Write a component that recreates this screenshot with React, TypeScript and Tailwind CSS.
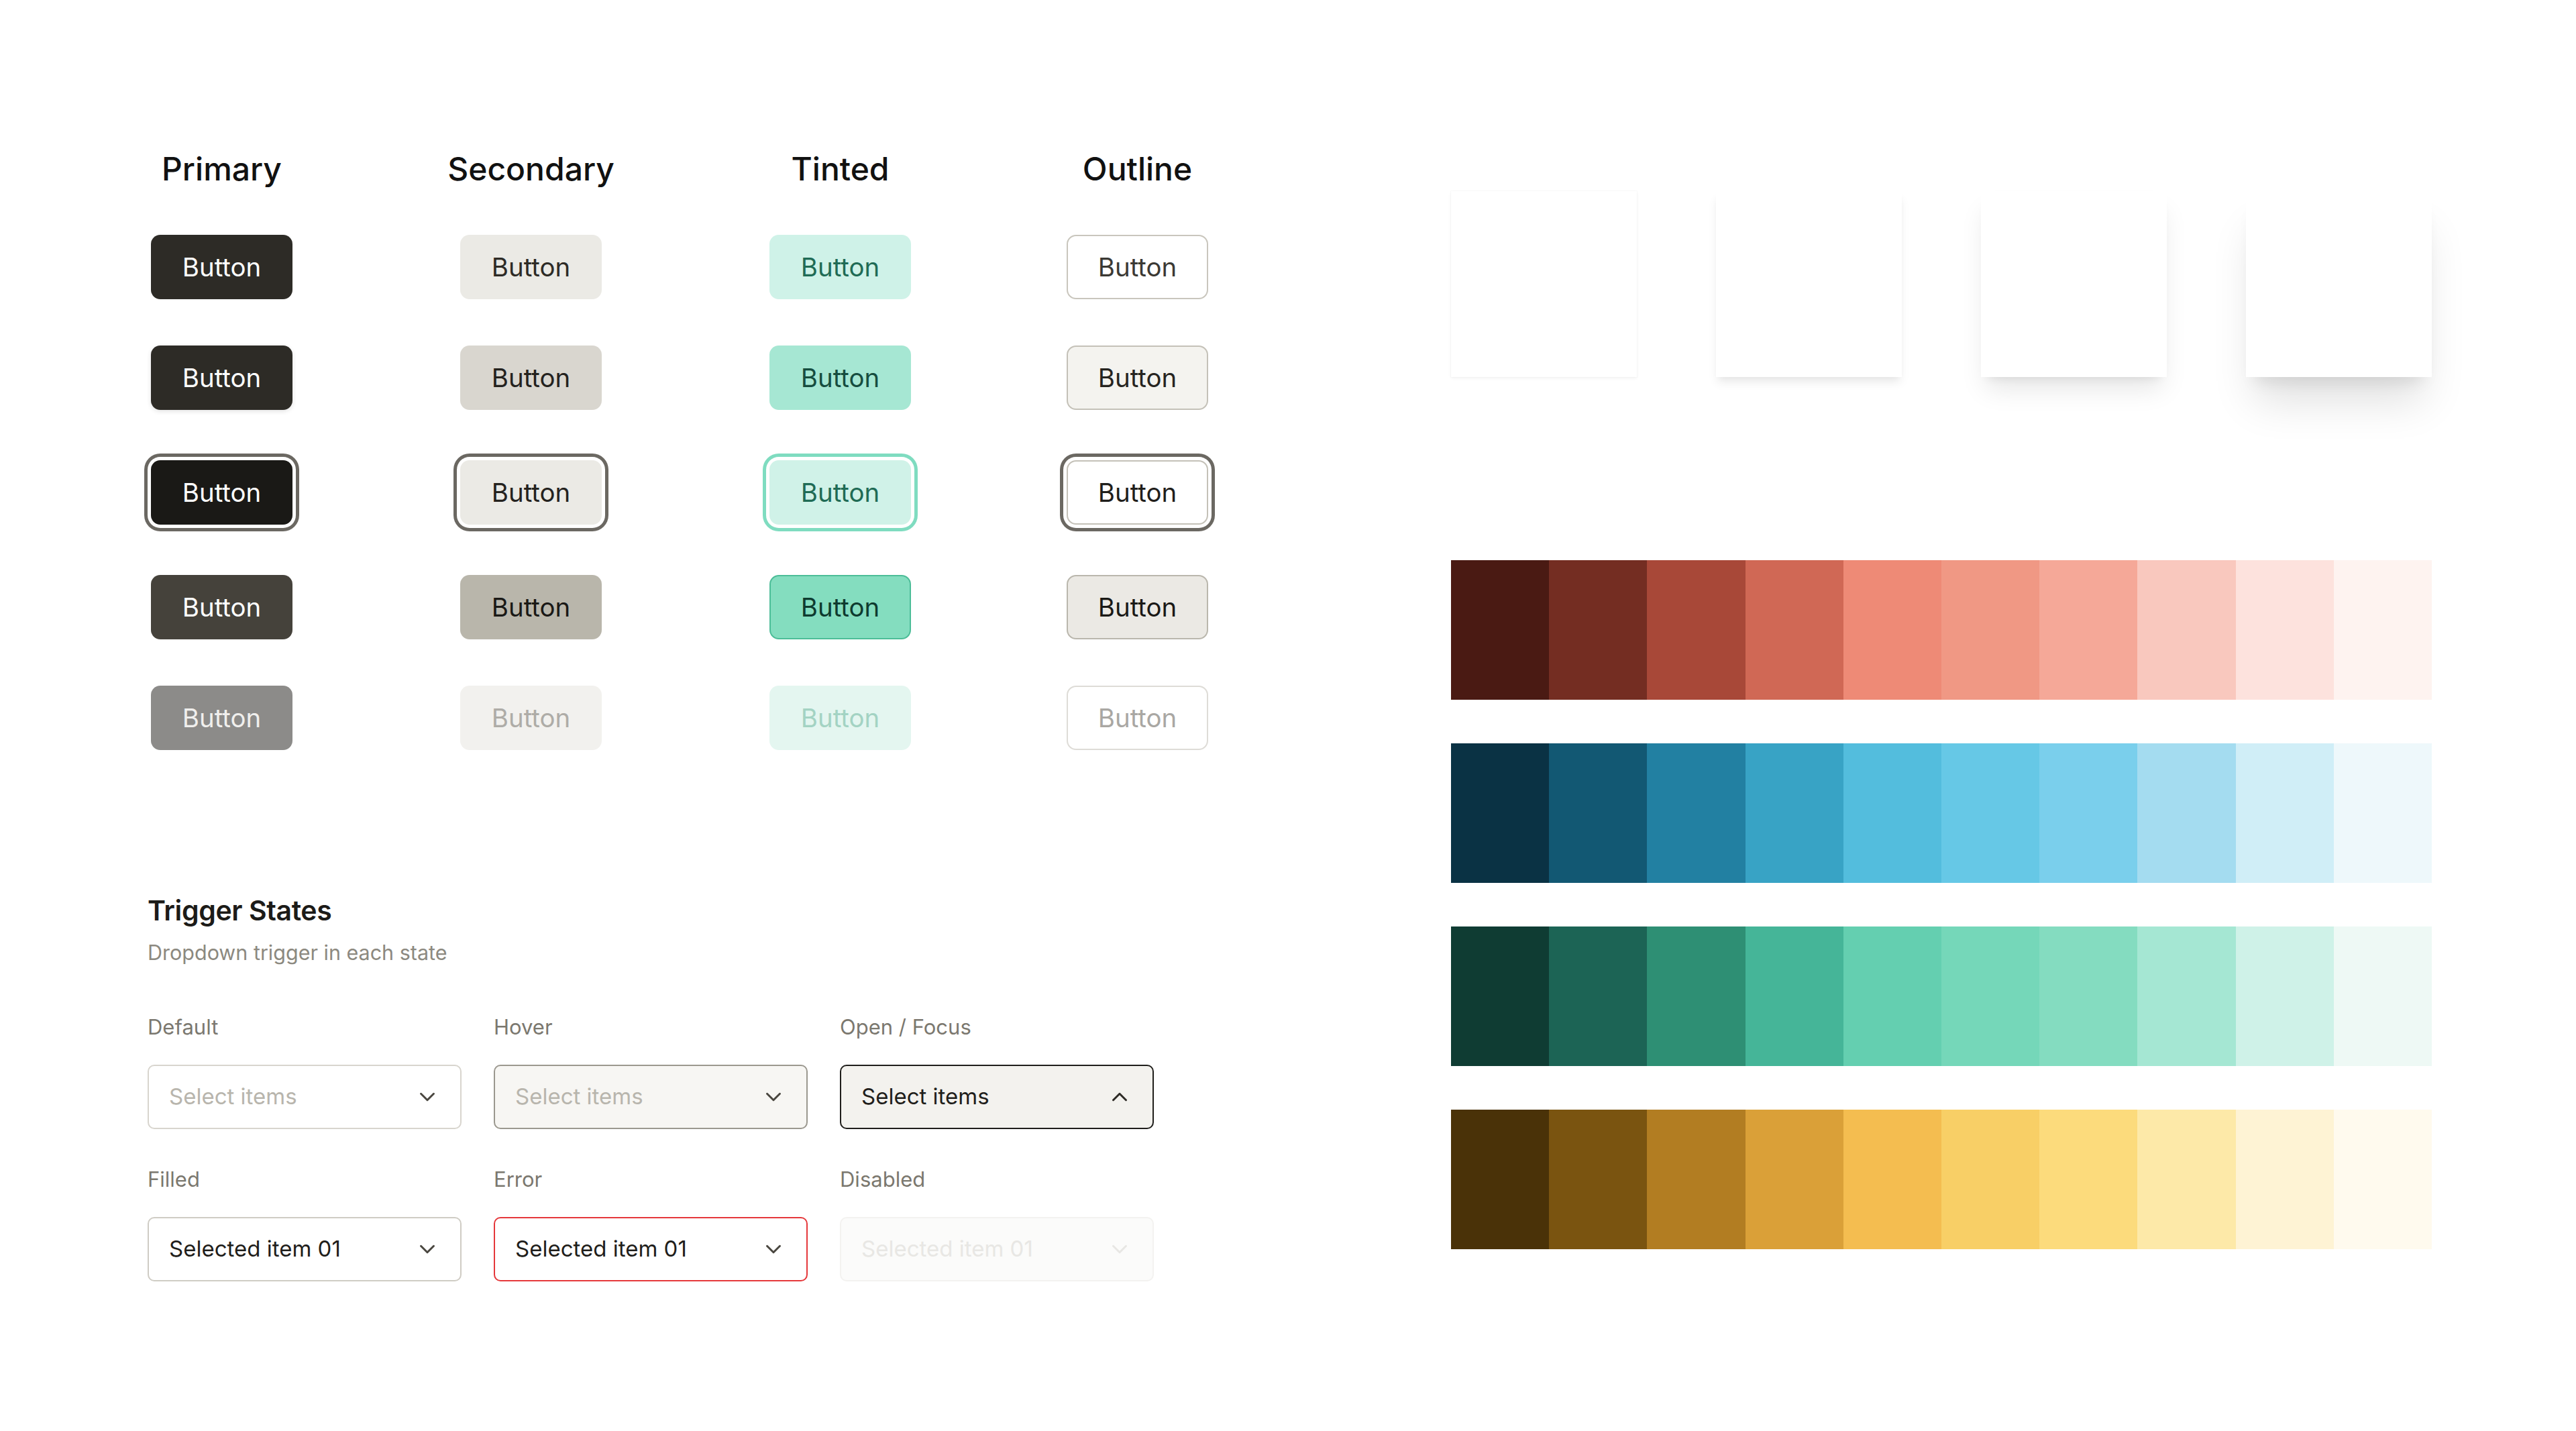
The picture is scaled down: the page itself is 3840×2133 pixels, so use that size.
import React from "react";
import { ChevronDown, ChevronUp } from "lucide-react";

type Btn = { cls: string; wrap?: string };

const btnBase =
  "w-[211px] h-[96px] rounded-[14px] flex items-center justify-center text-[38.4px] font-normal leading-none";

const columns: { title: string; width: string; buttons: Btn[] }[] = [
  {
    title: "Primary",
    width: "w-[211px]",
    buttons: [
      { cls: "bg-[#2d2b26] text-white" },
      { cls: "bg-[#2d2b26] text-white shadow-[0_2px_7px_rgba(0,0,0,0.12)]" },
      { cls: "bg-[#1a1916] text-white shadow-[0_0_0_5px_#ffffff,0_0_0_10px_#6b6862]", wrap: "my-[6px]" },
      { cls: "bg-[#45423b] text-white" },
      { cls: "bg-[#8c8b89] text-[#f0efed]" },
    ],
  },
  {
    title: "Secondary",
    width: "w-[247px]",
    buttons: [
      { cls: "bg-[#ebeae5] text-[#2d2b26]" },
      { cls: "bg-[#d9d6cf] text-[#24221e]" },
      { cls: "bg-[#ebeae5] text-[#24221e] shadow-[0_0_0_5px_#ffffff,0_0_0_10px_#6b6862]", wrap: "my-[6px]" },
      { cls: "bg-[#b9b6ab] text-[#1a1916]" },
      { cls: "bg-[#f2f1ee] text-[#aeaca7]" },
    ],
  },
  {
    title: "Tinted",
    width: "w-[211px]",
    buttons: [
      { cls: "bg-[#cff2e8] text-[#1f6b55]" },
      { cls: "bg-[#a6e7d3] text-[#164d3f]" },
      { cls: "bg-[#d0f2e8] text-[#1f6b55] shadow-[0_0_0_5px_#ffffff,0_0_0_10px_#7fdcc0]", wrap: "my-[6px]" },
      { cls: "bg-[#84ddbf] text-[#0e3b2f] border-[2.5px] border-[#4cbd98]" },
      { cls: "bg-[#e4f6f0] text-[#a3d3c3]" },
    ],
  },
  {
    title: "Outline",
    width: "w-[211px]",
    buttons: [
      { cls: "bg-white text-[#3b3934] border-[2.5px] border-[#c9c6bd]" },
      { cls: "bg-[#f4f3ef] text-[#262420] border-[2.5px] border-[#c4c1b8]" },
      {
        cls: "bg-white text-[#1f1e1b] border-[2.5px] border-[#c4c1b8] shadow-[0_0_0_5px_#ffffff,0_0_0_10px_#6b6862]",
        wrap: "my-[6px]",
      },
      { cls: "bg-[#ebe9e4] text-[#1a1916] border-[2.5px] border-[#bab7ad]" },
      { cls: "bg-white text-[#a9a7a3] border-[2.5px] border-[#dedcd7]" },
    ],
  },
];

type Trigger = {
  label: string;
  text: string;
  box: string;
  textCls: string;
  icon: string;
  open?: boolean;
};

const triggers: Trigger[] = [
  { label: "Default", text: "Select items", box: "bg-white border-2 border-[#d8d5ce]", textCls: "text-[#b8b5ad]", icon: "text-[#4a4740]" },
  { label: "Hover", text: "Select items", box: "bg-[#f7f6f3] border-2 border-[#9b988f]", textCls: "text-[#b8b5ad]", icon: "text-[#4a4740]" },
  { label: "Open / Focus", text: "Select items", box: "bg-[#f3f2ee] border-[2.5px] border-[#1f1e1b]", textCls: "text-[#1f1e1b]", icon: "text-[#2d2b26]", open: true },
  { label: "Filled", text: "Selected item 01", box: "bg-white border-2 border-[#cfccc4]", textCls: "text-[#1f1e1b]", icon: "text-[#4a4740]" },
  { label: "Error", text: "Selected item 01", box: "bg-white border-2 border-[#e5383b]", textCls: "text-[#1f1e1b]", icon: "text-[#4a4740]" },
  { label: "Disabled", text: "Selected item 01", box: "bg-[#fbfbfa] border-2 border-[#f3f2f0]", textCls: "text-[#e8e7e4]", icon: "text-[#e8e7e4]" },
];

const palettes: string[][] = [
  ["#4a1a13", "#742d22", "#a84838", "#d06855", "#ee8a76", "#f09884", "#f5a898", "#f9c8be", "#fde2dd", "#fef3f0"],
  ["#0a3244", "#125873", "#2280a2", "#38a3c5", "#53bddd", "#66c8e6", "#7acfec", "#a4dcf0", "#d0eef7", "#eef8fb"],
  ["#0f3c33", "#1c6455", "#2e8f74", "#45b598", "#64cfb0", "#75d7b9", "#84dcc0", "#a5e7d3", "#cff2e8", "#eef9f5"],
  ["#4a3208", "#7a5410", "#b27d22", "#daa038", "#f4bd50", "#f8cf66", "#fcdb7c", "#fde9a8", "#fef3d4", "#fffaee"],
];

const cardShadows = [
  "shadow-[0_2px_5px_rgba(0,0,0,0.05),0_0_0_1px_rgba(0,0,0,0.015)]",
  "shadow-[0_10px_14px_-2px_rgba(0,0,0,0.08),0_5px_10px_-5px_rgba(0,0,0,0.06)]",
  "shadow-[0_24px_36px_-7px_rgba(0,0,0,0.1),0_10px_14px_-10px_rgba(0,0,0,0.1)]",
  "shadow-[0_48px_60px_-12px_rgba(0,0,0,0.12),0_19px_24px_-14px_rgba(0,0,0,0.1)]",
];

function ButtonColumn({ title, width, buttons }: (typeof columns)[number]) {
  return (
    <div className={`flex flex-col items-center ${width}`}>
      <div className="h-[58px] leading-[58px] text-[48px] font-medium text-[#111111] whitespace-nowrap">
        {title}
      </div>
      <div className="mt-[69px] flex flex-col gap-[69px]">
        {buttons.map((b, i) => (
          <div key={i} className={b.wrap ?? ""}>
            <div className={`${btnBase} ${b.cls}`}>Button</div>
          </div>
        ))}
      </div>
    </div>
  );
}

function TriggerField({ t }: { t: Trigger }) {
  const Icon = t.open ? ChevronUp : ChevronDown;
  return (
    <div className="flex flex-col">
      <div className="leading-[44px] text-[31px] text-[#7b786f]">{t.label}</div>
      <div
        className={`mt-[34px] h-[96px] rounded-[10px] flex items-center justify-between pl-[30px] pr-[30px] ${t.box}`}
      >
        <span className={`text-[33px] ${t.textCls}`}>{t.text}</span>
        <Icon size={38} strokeWidth={1.9} className={t.icon} />
      </div>
    </div>
  );
}

export default function App() {
  return (
    <div className="w-[3840px] h-[2133px] bg-white flex overflow-hidden font-['Inter','Noto_Sans',sans-serif]">
      {/* component states */}
      <div className="w-[2163px] shrink-0 pl-[220px] pt-[223px] flex flex-col">
        <div className="ml-[5px] flex gap-[232px]">
          {columns.map((c) => (
            <ButtonColumn key={c.title} {...c} />
          ))}
        </div>

        <div className="mt-[215px] flex flex-col">
          <div className="h-[48px] leading-[48px] text-[41px] font-semibold tracking-[-0.01em] text-[#1c1b18]">
            Trigger States
          </div>
          <div className="mt-[17px] leading-[44px] text-[30.5px] text-[#8c8980]">
            Dropdown trigger in each state
          </div>
          <div className="mt-[67px] grid grid-cols-[468px_468px_468px] gap-x-[48px] gap-y-[53px]">
            {triggers.map((t) => (
              <TriggerField key={t.label} t={t} />
            ))}
          </div>
        </div>
      </div>

      {/* elevation + colour scales */}
      <div className="w-[1462px] shrink-0 pt-[285px] flex flex-col">
        <div className="flex justify-between">
          {cardShadows.map((s, i) => (
            <div key={i} className={`w-[277px] h-[277px] bg-white ${s}`} />
          ))}
        </div>
        <div className="mt-[273px] flex flex-col gap-[65px]">
          {palettes.map((row, r) => (
            <div key={r} className="h-[208px] flex">
              {row.map((c) => (
                <div key={c} className="flex-1 h-full" style={{ backgroundColor: c }} />
              ))}
            </div>
          ))}
        </div>
      </div>
    </div>
  );
}
